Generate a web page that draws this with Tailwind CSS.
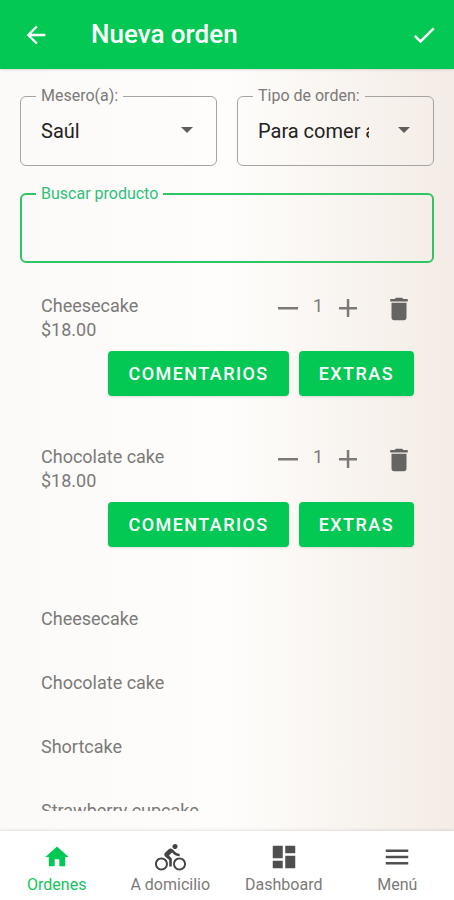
<!DOCTYPE html>
<html lang="es">
<head>
  <meta charset="UTF-8" />
  <meta name="viewport" content="width=device-width, initial-scale=1.0"/>
  <title>Nueva orden</title>
  <script src="https://cdn.jsdelivr.net/npm/@tailwindcss/browser@4"></script>
</head>
<body class="h-screen flex flex-col font-[Roboto,sans-serif] text-[#7b7a78] bg-linear-to-r from-[#fbfaf8] via-[#fefdfb] to-[#f4ece6]">

  <!-- Top bar -->
  <header class="flex items-center h-[69px] shrink-0 px-4 bg-[#03c853] text-white shadow-sm">
    <button type="button" aria-label="Regresar" class="p-1.5">
      <svg class="size-7" viewBox="0 0 24 24" fill="currentColor"><path d="M20 11H7.83l5.59-5.59L12 4l-8 8 8 8 1.41-1.41L7.83 13H20v-2z"/></svg>
    </button>
    <h1 class="flex-1 pl-[35px] text-[26px] font-medium">Nueva orden</h1>
    <button type="button" aria-label="Guardar">
      <svg class="size-7" viewBox="0 0 24 24" fill="currentColor"><path d="M9 16.17L4.83 12l-1.42 1.41L9 19 21 7l-1.41-1.41z"/></svg>
    </button>
  </header>

  <!-- Main Content -->
  <main class="flex-1 min-h-0 flex flex-col px-5 pt-[17px] pb-5">
    <div class="grid grid-cols-2 gap-5">
      <fieldset class="relative min-w-0 border border-[#a5a4a2] rounded-md pb-[9px]">
        <legend class="ml-[15px] px-[5px] text-base leading-5"><label for="mesero">Mesero(a):</label></legend>
        <select id="mesero" class="appearance-none block w-full h-[50px] pl-5 pr-16 text-xl text-[#222] bg-transparent focus:outline-none">
          <option>Saúl</option>
        </select>
        <svg class="absolute right-[23px] top-[21px] w-3 h-1.5 pointer-events-none" viewBox="0 0 12 6" fill="#5f5e5d"><path d="M0 0h12L6 6z"/></svg>
      </fieldset>
      <fieldset class="relative min-w-0 border border-[#a5a4a2] rounded-md pb-[9px]">
        <legend class="ml-[15px] px-[5px] text-base leading-5"><label for="tipo">Tipo de orden:</label></legend>
        <select id="tipo" class="appearance-none block w-full h-[50px] pl-5 pr-16 text-xl text-[#222] bg-transparent focus:outline-none">
          <option>Para comer aquí</option>
        </select>
        <svg class="absolute right-[23px] top-[21px] w-3 h-1.5 pointer-events-none" viewBox="0 0 12 6" fill="#5f5e5d"><path d="M0 0h12L6 6z"/></svg>
      </fieldset>
    </div>

    <fieldset class="mt-[18px] min-w-0 border-2 border-[#2fc563] rounded-md">
      <legend class="ml-[14px] px-[5px] text-base leading-5 text-[#2fc07a]"><label for="buscar">Buscar producto</label></legend>
      <input type="text" id="buscar" class="block w-full h-[57px] px-5 text-xl text-[#222] bg-transparent focus:outline-none">
    </fieldset>

    <!-- Selected products -->
    <section class="mt-[7px] pl-[21px] pr-5">
      <article class="pt-6 pb-[25px]">
        <div class="flex">
          <div class="flex-1 text-lg leading-6">
            <h2>Cheesecake</h2>
            <p>$18.00</p>
          </div>
          <div class="flex items-start">
            <button type="button" aria-label="Quitar uno" class="pt-0.5"><svg class="size-6" viewBox="0 0 24 24" fill="currentColor"><path d="M2 11h20v2.500H2z"/></svg></button>
            <span class="w-9 text-center text-lg leading-6">1</span>
            <button type="button" aria-label="Agregar uno" class="pt-0.5"><svg class="size-6" viewBox="0 0 24 24" fill="currentColor"><path d="M3 11h7.800V3h2.500v8H21v2.500h-7.700V21h-2.500v-7.500H3z"/></svg></button>
            <button type="button" aria-label="Eliminar" class="ml-6"><svg class="size-[30px]" viewBox="0 0 24 24" fill="#666463"><path d="M6 19c0 1.100.9 2 2 2h8c1.100 0 2-.9 2-2V7H6v12zM19 4h-3.500l-1-1h-5l-1 1H5v2h14V4z"/></svg></button>
          </div>
        </div>
        <div class="flex justify-end gap-2.5 mt-[9px] text-lg font-medium text-white">
          <button type="button" class="h-[45px] px-5 rounded bg-[#03c853] shadow-sm tracking-[0.08em]">COMENTARIOS</button>
          <button type="button" class="h-[45px] px-5 rounded bg-[#03c853] shadow-sm tracking-[0.08em]">EXTRAS</button>
        </div>
      </article>

      <article class="pt-6 pb-[25px]">
        <div class="flex">
          <div class="flex-1 text-lg leading-6">
            <h2>Chocolate cake</h2>
            <p>$18.00</p>
          </div>
          <div class="flex items-start">
            <button type="button" aria-label="Quitar uno" class="pt-0.5"><svg class="size-6" viewBox="0 0 24 24" fill="currentColor"><path d="M2 11h20v2.500H2z"/></svg></button>
            <span class="w-9 text-center text-lg leading-6">1</span>
            <button type="button" aria-label="Agregar uno" class="pt-0.5"><svg class="size-6" viewBox="0 0 24 24" fill="currentColor"><path d="M3 11h7.800V3h2.500v8H21v2.500h-7.700V21h-2.500v-7.500H3z"/></svg></button>
            <button type="button" aria-label="Eliminar" class="ml-6"><svg class="size-[30px]" viewBox="0 0 24 24" fill="#666463"><path d="M6 19c0 1.100.9 2 2 2h8c1.100 0 2-.9 2-2V7H6v12zM19 4h-3.500l-1-1h-5l-1 1H5v2h14V4z"/></svg></button>
          </div>
        </div>
        <div class="flex justify-end gap-2.5 mt-[9px] text-lg font-medium text-white">
          <button type="button" class="h-[45px] px-5 rounded bg-[#03c853] shadow-sm tracking-[0.08em]">COMENTARIOS</button>
          <button type="button" class="h-[45px] px-5 rounded bg-[#03c853] shadow-sm tracking-[0.08em]">EXTRAS</button>
        </div>
      </article>
    </section>

    <!-- Search results -->
    <ul class="flex-1 min-h-0 overflow-hidden mt-[15px] px-[21px] text-lg leading-[64px]">
      <li>Cheesecake</li>
      <li>Chocolate cake</li>
      <li>Shortcake</li>
      <li>Strawberry cupcake</li>
    </ul>
  </main>

  <!-- Bottom navigation -->
  <nav class="grid grid-cols-4 h-[69px] shrink-0 pt-3 bg-white shadow-[0_-1px_3px_rgba(0,0,0,0.1)] text-base leading-5">
    <a href="#ordenes" class="flex flex-col items-center gap-1 text-[#14c45c]">
      <span class="h-7 flex items-center"><svg class="size-7" viewBox="0 0 24 24" fill="#03c853"><path d="M10 20v-6h4v6h5v-8h3L12 3 2 12h3v8z"/></svg></span>
      Ordenes
    </a>
    <a href="#domicilio" class="flex flex-col items-center gap-1">
      <span class="h-7 flex items-center"><svg class="size-[31px]" viewBox="0 0 24 24" fill="#444"><path d="M15.500 5.500c1.100 0 2-.9 2-2s-.9-2-2-2-2 .9-2 2 .9 2 2 2zM5 12c-2.800 0-5 2.200-5 5s2.200 5 5 5 5-2.200 5-5-2.200-5-5-5zm0 8.500c-1.900 0-3.500-1.600-3.500-3.500s1.600-3.500 3.500-3.500 3.500 1.600 3.500 3.500-1.600 3.500-3.500 3.500zm5.800-10l2.400-2.400.8.8c1.300 1.300 3 2.100 5.100 2.100V9c-1.500 0-2.700-.6-3.600-1.500l-1.900-1.900c-.5-.4-1-.6-1.600-.6s-1.100.2-1.400.6L7.800 8.400c-.4.4-.6.9-.6 1.400 0 .6.2 1.100.6 1.400L11 14v5h2v-6.200l-2.200-2.300zM19 12c-2.800 0-5 2.200-5 5s2.200 5 5 5 5-2.200 5-5-2.200-5-5-5zm0 8.500c-1.900 0-3.500-1.600-3.500-3.500s1.600-3.500 3.500-3.500 3.500 1.600 3.500 3.500-1.600 3.500-3.500 3.500z"/></svg></span>
      A domicilio
    </a>
    <a href="#dashboard" class="flex flex-col items-center gap-1">
      <span class="h-7 flex items-center"><svg class="size-[30px]" viewBox="0 0 24 24" fill="#4f4f4f"><path d="M3 13h8V3H3v10zm0 8h8v-6H3v6zm10 0h8V11h-8v10zm0-18v6h8V3h-8z"/></svg></span>
      Dashboard
    </a>
    <a href="#menu" class="flex flex-col items-center gap-1">
      <span class="h-7 flex items-center"><svg class="size-[30px]" viewBox="0 0 24 24" fill="#4f4f4f"><path d="M3 18h18v-2H3v2zm0-5h18v-2H3v2zm0-7v2h18V6H3z"/></svg></span>
      Menú
    </a>
  </nav>

</body>
</html>
